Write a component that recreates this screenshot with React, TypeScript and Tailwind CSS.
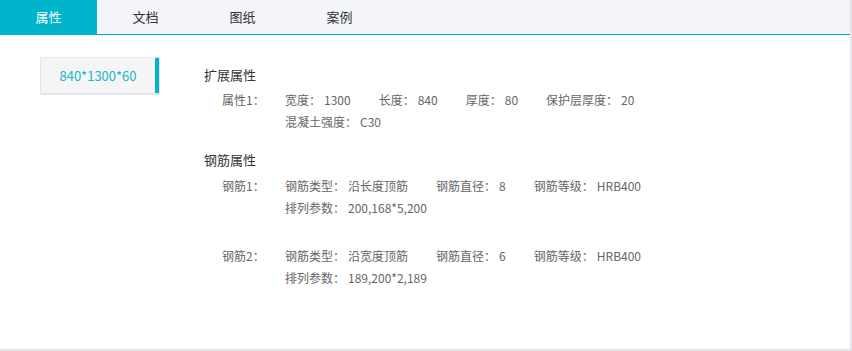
import React from "react";

const font = { fontFamily: '"Microsoft YaHei", "Noto Sans CJK SC", "Noto Sans", sans-serif' };

function Item({ label, value, last }: { label: string; value: string; last?: boolean }) {
  return (
    <span className={last ? "" : "mr-[28px]"}>
      {label}：<span className="ml-[3px]">{value}</span>
    </span>
  );
}

function Row({ label, lines, className }: { label: string; lines: { label: string; value: string }[][]; className?: string }) {
  return (
    <div className={"flex text-[12px] leading-[22px] text-[#666] " + (className ?? "")}>
      <div className="w-[63px] shrink-0">{label}</div>
      <div className="flex flex-col">
        {lines.map((line, i) => (
          <div key={i} className="flex whitespace-nowrap">
            {line.map((it, j) => (
              <Item key={j} label={it.label} value={it.value} last={j === line.length - 1} />
            ))}
          </div>
        ))}
      </div>
    </div>
  );
}

export default function App() {
  const tabs = ["属性", "文档", "图纸", "案例"];
  return (
    <div style={font} className="w-[852px] h-[351px] bg-white overflow-hidden">
      <div className="w-[852px] h-[351px] border-r-2 border-b-2 border-[#e4e5ea] flex flex-col">
        <div className="flex h-[35px] bg-[#f4f5f9] border-b border-[#00b4cc] shrink-0">
          {tabs.map((t, i) => (
            <div
              key={t}
              className={
                "w-[97px] flex items-center justify-center text-[13px] " +
                (i === 0 ? "bg-[#00b4cc] text-white" : "text-[#333]")
              }
            >
              {t}
            </div>
          ))}
        </div>
        <div className="flex pt-[22px]">
          <div className="ml-[40px] w-[120px] h-[38px] flex items-stretch border border-[#e3e5ea] border-b-2 bg-[#f5f5f5]">
            <div className="flex-1 flex items-center justify-center text-[13px] text-[#1eb4cc]">840*1300*60</div>
            <div className="w-[4px] bg-[#00b4cc]" />
          </div>
          <div className="ml-[44px] pt-[8px] flex flex-col">
            <div className="text-[13px] leading-[20px] text-[#333]">扩展属性</div>
            <Row
              className="ml-[18px] mt-[4px]"
              label="属性1："
              lines={[
                [
                  { label: "宽度", value: "1300" },
                  { label: "长度", value: "840" },
                  { label: "厚度", value: "80" },
                  { label: "保护层厚度", value: "20" },
                ],
                [{ label: "混凝土强度", value: "C30" }],
              ]}
            />
            <div className="text-[13px] leading-[20px] text-[#333] mt-[17px]">钢筋属性</div>
            <Row
              className="ml-[18px] mt-[5px]"
              label="钢筋1："
              lines={[
                [
                  { label: "钢筋类型", value: "沿长度顶筋" },
                  { label: "钢筋直径", value: "8" },
                  { label: "钢筋等级", value: "HRB400" },
                ],
                [{ label: "排列参数", value: "200,168*5,200" }],
              ]}
            />
            <Row
              className="ml-[18px] mt-[26px]"
              label="钢筋2："
              lines={[
                [
                  { label: "钢筋类型", value: "沿宽度顶筋" },
                  { label: "钢筋直径", value: "6" },
                  { label: "钢筋等级", value: "HRB400" },
                ],
                [{ label: "排列参数", value: "189,200*2,189" }],
              ]}
            />
          </div>
        </div>
      </div>
    </div>
  );
}
